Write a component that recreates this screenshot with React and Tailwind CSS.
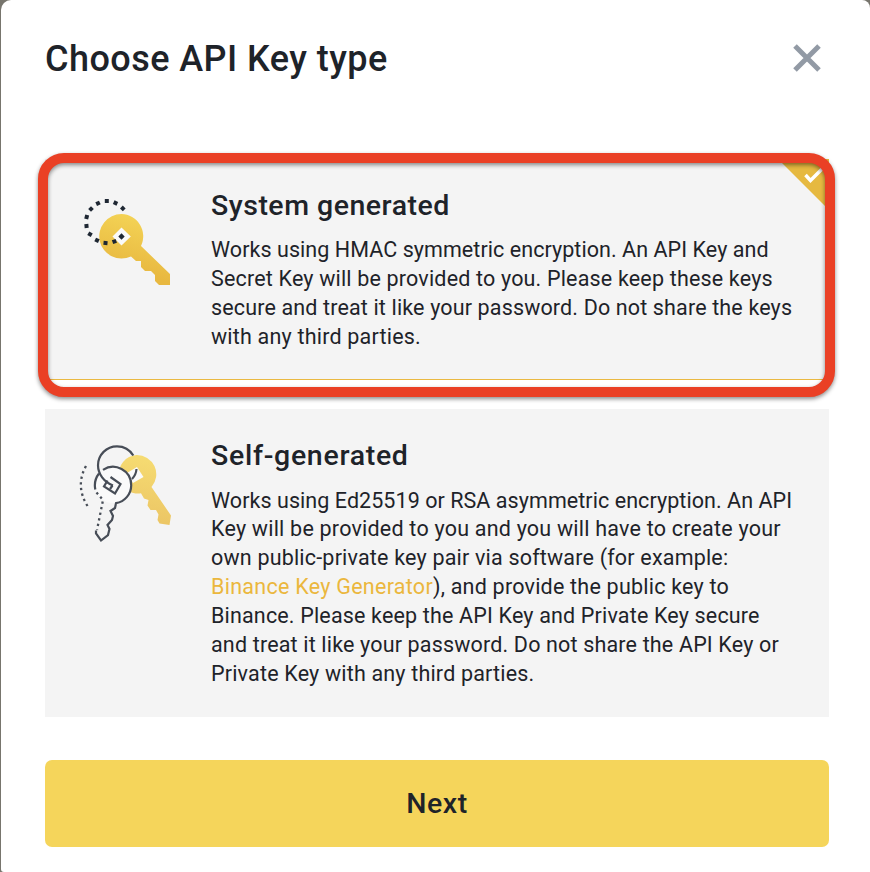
import React from "react";

function SystemKeyIcon() {
  return (
    <svg width="100" height="100" viewBox="75 190 100 100" fill="none">
      <defs>
        <linearGradient id="gold" x1="140" y1="210" x2="120" y2="285" gradientUnits="userSpaceOnUse">
          <stop stopColor="#f5d658" />
          <stop offset="0.8" stopColor="#e8b840" />
        </linearGradient>
      </defs>
      <path fill="url(#gold)" d="M121.500 214a22.300 22.300 0 0 1 19.500 32L170 274V285H159L155 281V275L151 271H145L141 267V261H136L131 256.500A22.300 22.300 0 1 1 121.500 214Z" />
      <path fill="#fafafa" d="M121.500 227.500L130.800 236.500L121.500 245.500L112.500 236.500Z" />
      <g fill="#1e2733">
        <path d="M121.500 233.300l3.200 3.200-3.200 3.200-3.200-3.200Z" />
        {[[122.800,208.400,45],[115.500,203,25],[106.800,201,0],[98,203.300,-25],[91,209,-45],[86.700,217,15],[86.500,226,-5],[90,234.200,30],[97,240.300,25],[105.500,243,5],[114.400,241.500,-20]].map(([x, y, r]) => (
          <rect key={x} x={x - 2} y={y - 2} width="4" height="4" transform={`rotate(${r} ${x} ${y})`} />
        ))}
      </g>
    </svg>
  );
}

function SelfKeyIcon() {
  return (
    <svg width="100" height="105" viewBox="75 440 100 105" fill="none">
      <defs>
        <linearGradient id="gold2" x1="150" y1="455" x2="138" y2="525" gradientUnits="userSpaceOnUse">
          <stop stopColor="#f6dc72" />
          <stop offset="1" stopColor="#ebc464" />
        </linearGradient>
      </defs>
      <path fill="url(#gold2)" d="M136.500 455A19.300 19.300 0 0 1 151.500 487L171 515.500L169.500 525L159.500 523.500L157.500 520L158.500 514.500L156 510H150.500L147.500 505.500L148.500 500L144 498.500L141 493.300A19.300 19.300 0 1 1 136.500 455Z" />
      <path fill="#fafafa" d="M137 467L143.500 477L133 483L127 473Z" />
      <circle cx="113" cy="485" r="18" fill="#fafafa" />
      <g stroke="#474d57" strokeWidth="2.200">
        <path d="M133.300 455.500A19 19 0 0 0 117 446.300A19 19 0 0 0 98 465.300C98 474 104 482 113 485.500" />
        <path d="M136.500 469Q136 475 132 479" />
        <path d="M95.300 489.500Q93.500 480.500 99 473.500M103 469.900A18.200 18.200 0 0 1 131.200 485A18.200 18.200 0 0 1 116 503.200L115 508L110.500 511L113 516L112 520L107.500 525L109.500 529L108 535L101 540.500L96 533.500V530.500" />
        <path d="M110.500 477L120.500 484L115 493.500L104 486.500L107.500 480.500" />
        <path d="M112.500 485.500L110 489" />
      </g>
      <g stroke="#474d57" strokeWidth="2.300" strokeDasharray="2.300 3.400">
        <path d="M86 466Q75 486 87.500 506" />
        <path d="M96.500 492.500L103 500L97 530" />
      </g>
    </svg>
  );
}

const Line = ({ t, children }) => <span className={`block whitespace-nowrap ${t || ""}`}>{children}</span>;

export default function App() {
  return (
    <div className="h-[872px] w-[870px] overflow-hidden bg-[#77756d] pl-px font-[Roboto,sans-serif] text-[#1e2329]">
      <main className="flex h-full w-full flex-col rounded-tl-[10px] rounded-tr-[8px] rounded-bl-[3px] bg-white pl-11 pr-[41px]">
        <header className="flex h-[159px] shrink-0 items-start justify-between pt-[34px]">
          <h1 className="text-[36px] font-medium leading-[50px] tracking-[0.45px]">Choose API Key type</h1>
          <svg className="mr-[7px] mt-[9px]" width="30" height="30" viewBox="0 0 30 30" stroke="#929aa5" strokeWidth="5">
            <path d="M3 3L27 27M27 3L3 27" />
          </svg>
        </header>
        <section className="relative flex h-[221px] shrink-0 border-b border-[#eab942] bg-[#f4f4f4] pl-[30px] pt-[31px]">
          <SystemKeyIcon />
          <div className="ml-9">
            <h2 className="text-[28.500px] font-medium leading-8 tracking-[0.5px]">System generated</h2>
            <p className="mt-[13px] text-[21.500px] leading-[29px]">
              <Line t="tracking-[0.06px]">Works using HMAC symmetric encryption. An API Key and</Line>
              <Line t="tracking-[0.175px]">Secret Key will be provided to you. Please keep these keys</Line>
              <Line t="tracking-[0.145px]">secure and treat it like your password. Do not share the keys</Line>
              <Line t="tracking-[0.2px]">with any third parties.</Line>
            </p>
          </div>
          <svg className="absolute right-0 top-0" width="51" height="51" viewBox="0 0 51 51">
            <path d="M0 0H51V51Z" fill="#e6b940" />
            <path d="M27.500 16L32.500 21.500L46 8" stroke="#fff" strokeWidth="3.500" fill="none" />
          </svg>
          <div className="absolute -left-[7px] -top-[6px] h-[244px] w-[797px] rounded-[26px] border-[10px] border-[#ea4025] drop-shadow-[0_2px_2px_rgba(0,0,0,0.45)]" />
        </section>
        <section className="mt-[29px] flex h-[308px] shrink-0 bg-[#f4f4f4] pl-[30px] pt-[31px]">
          <SelfKeyIcon />
          <div className="ml-9">
            <h2 className="text-[28.500px] font-medium leading-8 tracking-[0.7px]">Self-generated</h2>
            <p className="mt-[14.500px] text-[21.500px] leading-[28.900px]">
              <Line t="tracking-[0.06px]">Works using Ed25519 or RSA asymmetric encryption. An API</Line>
              <Line t="tracking-[0.215px]">Key will be provided to you and you will have to create your</Line>
              <Line t="tracking-[0.19px]">own public-private key pair via software (for example:</Line>
              <Line t="tracking-[0.22px]"><span className="text-[#ebb73d] tracking-[0.27px]">Binance Key Generator</span>), and provide the public key to</Line>
              <Line t="tracking-[0.165px]">Binance. Please keep the API Key and Private Key secure</Line>
              <Line t="tracking-[0.165px]">and treat it like your password. Do not share the API Key or</Line>
              <Line t="tracking-[0.18px]">Private Key with any third parties.</Line>
            </p>
          </div>
        </section>
        <button className="mt-[43px] h-[87px] shrink-0 rounded-[7px] bg-[#f5d55b] pt-px text-[28.500px] font-medium tracking-[0.5px]">Next</button>
      </main>
    </div>
  );
}
